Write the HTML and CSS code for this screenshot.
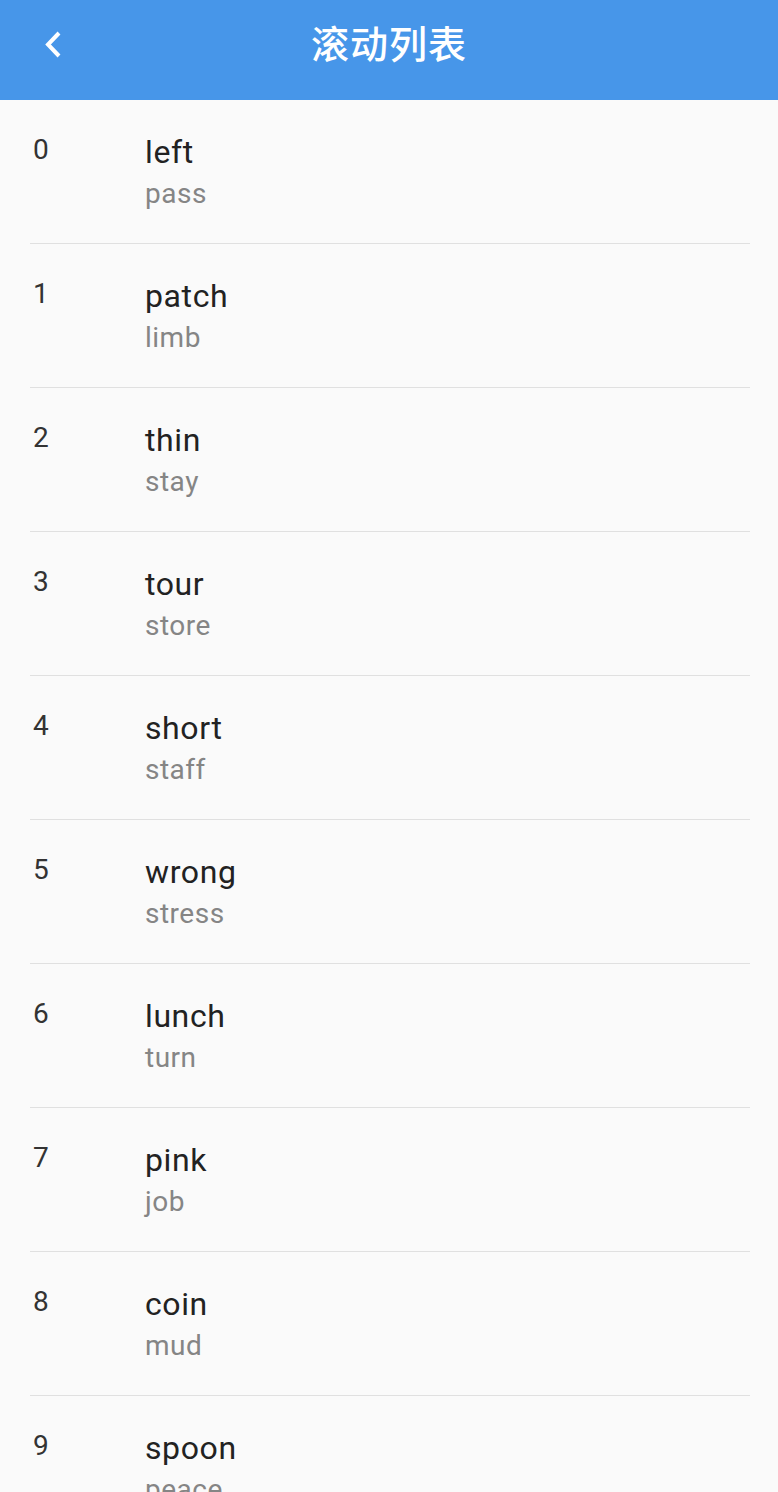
FILE: index.html
```html
<!DOCTYPE html>
<html lang="zh">
<head>
<meta charset="utf-8">
<title>滚动列表</title>
<link rel="stylesheet" href="styles.css">
</head>
<body>
<header class="appbar">
  <button class="back" aria-label="返回">
    <svg width="20" height="30" viewBox="0 0 20 30"><path d="M15 3 L4 14.5 L15 26" fill="none" stroke="#fff" stroke-width="4" stroke-linecap="butt" stroke-linejoin="miter"/></svg>
  </button>
  <h1 class="title">滚动列表</h1>
</header>
<main class="list">
  <div class="row"><span class="idx">0</span><div class="texts"><div class="t">left</div><div class="s">pass</div></div></div>
  <div class="row"><span class="idx">1</span><div class="texts"><div class="t">patch</div><div class="s">limb</div></div></div>
  <div class="row"><span class="idx">2</span><div class="texts"><div class="t">thin</div><div class="s">stay</div></div></div>
  <div class="row"><span class="idx">3</span><div class="texts"><div class="t">tour</div><div class="s">store</div></div></div>
  <div class="row"><span class="idx">4</span><div class="texts"><div class="t">short</div><div class="s">staff</div></div></div>
  <div class="row"><span class="idx">5</span><div class="texts"><div class="t">wrong</div><div class="s">stress</div></div></div>
  <div class="row"><span class="idx">6</span><div class="texts"><div class="t">lunch</div><div class="s">turn</div></div></div>
  <div class="row"><span class="idx">7</span><div class="texts"><div class="t">pink</div><div class="s">job</div></div></div>
  <div class="row"><span class="idx">8</span><div class="texts"><div class="t">coin</div><div class="s">mud</div></div></div>
  <div class="row"><span class="idx">9</span><div class="texts"><div class="t">spoon</div><div class="s">peace</div></div></div>
</main>
</body>
</html>
```
FILE: styles.css
```css
html, body {
  margin: 0;
  padding: 0;
  background: #fafafa;
  height: 1492px;
  overflow: hidden;
}
body {
  font-family: Roboto, "Noto Sans", "Noto Sans CJK SC", sans-serif;
}
.appbar {
  position: relative;
  height: 100px;
  background: #4796e9;
  display: flex;
  align-items: center;
  justify-content: center;
  padding-bottom: 16px;
  box-sizing: border-box;
}
.back {
  position: absolute;
  left: 44px;
  top: 30px;
  width: 24px;
  height: 30px;
  padding: 0;
  border: 0;
  background: transparent;
  display: flex;
}
.title {
  margin: 0;
  color: #fff;
  font-family: "Noto Sans CJK SC", sans-serif;
  font-size: 38px;
  font-weight: 500;
  line-height: 50px;
  letter-spacing: 1px;
}
.list {
  display: flex;
  flex-direction: column;
}
.row {
  margin: 0 28px 0 30px;
  height: 144px;
  box-sizing: border-box;
  border-bottom: 1px solid #e0e0e0;
  display: flex;
  align-items: flex-start;
  padding: 33px 0 0 3px;
}
.idx {
  width: 112px;
  flex: none;
  font-size: 28px;
  line-height: 34px;
  color: #333;
  margin-top: 0;
}
.texts {
  display: flex;
  flex-direction: column;
  gap: 6px;
}
.t {
  font-size: 32px;
  line-height: 38px;
  color: #222;
  letter-spacing: 0.6px;
}
.s {
  font-size: 28px;
  line-height: 34px;
  color: #858585;
  letter-spacing: 0.5px;
}
```
